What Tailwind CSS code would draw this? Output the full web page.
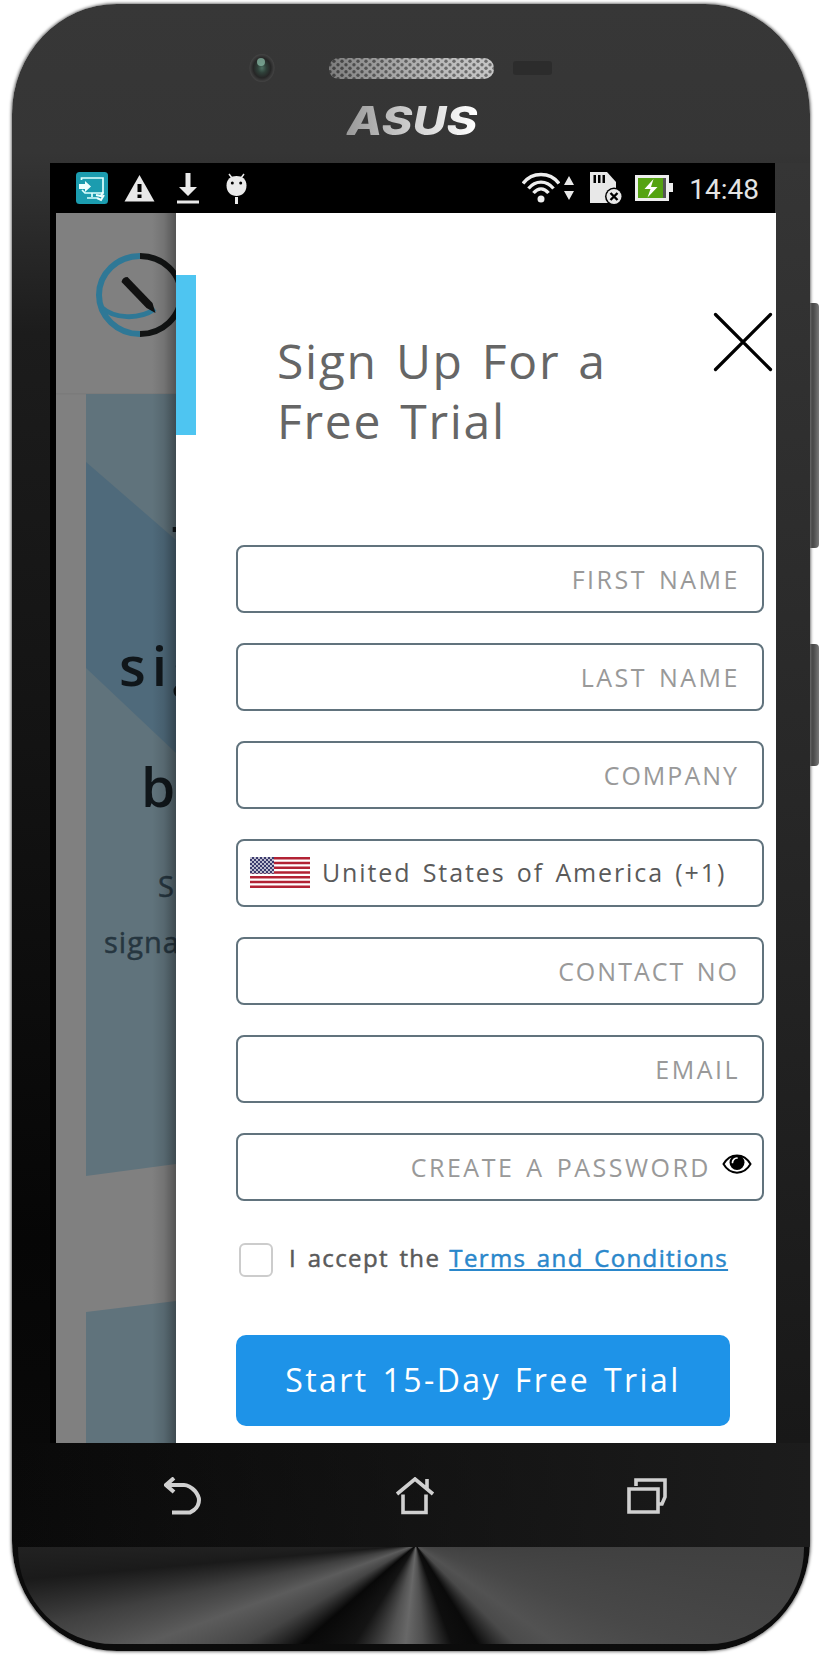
<!DOCTYPE html>
<html lang="en">
<head>
<meta charset="utf-8">
<title>Sign Up For a Free Trial</title>
<script src="https://cdn.jsdelivr.net/npm/@tailwindcss/browser@4"></script>
</head>
<body class="bg-white">
<main class="relative w-[832px] h-[1658px] overflow-hidden bg-white font-['Open_Sans',sans-serif]">
  <!-- volume and power keys -->
  <div class="absolute left-[806px] top-[303px] w-[13px] h-[245px] rounded-r-sm bg-gradient-to-r from-[#222] via-[#444] to-[#777]"></div>
  <div class="absolute left-[806px] top-[644px] w-[13px] h-[122px] rounded-r-sm bg-gradient-to-r from-[#222] via-[#444] to-[#777]"></div>

  <!-- phone body -->
  <div class="absolute left-[12px] top-[4px] w-[798px] h-[1647px] overflow-hidden rounded-[105px/110px] bg-[linear-gradient(to_bottom,#373737_0%,#353535_9%,#1c1c1c_20%,#131313_45%,#060606_75%,#0c0c0c_100%)] shadow-[0_0_3px_1px_#777]">
    <div class="absolute right-0 top-[159px] w-[35px] h-[1280px] bg-gradient-to-b from-[#353535] via-[#272727] to-[#181818]"></div>
    <div class="flex flex-col">
      <!-- top bezel -->
      <header class="flex flex-col items-center h-[159px]">
        <svg class="w-[798px] h-[93px]" viewBox="12 4 798 93">
          <defs>
            <pattern id="mesh" width="8" height="7" patternUnits="userSpaceOnUse"><rect width="8" height="7" fill="#b8b8b8"/><circle cx="2" cy="1.8" r="1.7" fill="#4a4a4a"/><circle cx="6" cy="5.3" r="1.7" fill="#4a4a4a"/></pattern>
            <linearGradient id="sp"><stop offset="0" stop-color="#333" stop-opacity=".45"/><stop offset="1" stop-color="#fff" stop-opacity=".2"/></linearGradient>
            <radialGradient id="cam"><stop offset="0" stop-color="#4d7062"/><stop offset=".35" stop-color="#2f4039"/><stop offset=".7" stop-color="#262626"/><stop offset="1" stop-color="#444"/></radialGradient>
          </defs>
          <ellipse cx="262" cy="68" rx="12.500" ry="14" fill="url(#cam)"/>
          <ellipse cx="261" cy="62" rx="4" ry="4" fill="#8fc2ac" opacity=".7"/>
          <rect x="329" y="58" width="165" height="21" rx="10" fill="url(#mesh)"/>
          <rect x="329" y="58" width="165" height="21" rx="10" fill="url(#sp)"/>
          <rect x="513" y="61" width="39" height="14" rx="3" fill="#2c2c2c"/>
        </svg>
        <div class="-mt-[1px] ml-[1px] h-[50px] leading-[50px] text-[40px] font-extrabold italic scale-x-[1.17] font-['Inter',sans-serif] bg-gradient-to-r from-[#999] via-[#d0d0d0] to-[#fff] bg-clip-text text-transparent">ASUS</div>
      </header>

      <!-- screen -->
      <section class="ml-[38px] w-[726px] h-[1280px] bg-black">
        <div class="flex items-center justify-between h-[50px] pl-[26px] pr-[17px]">
          <div class="flex items-center">
            <svg class="w-8 h-8" viewBox="0 0 32 32" fill="none"><rect width="32" height="32" rx="3.500" fill="#1b9caf"/><path d="M5.500 8V6H27v15H9l-3-3M16 21v4M11 26h10" stroke="#dff" stroke-width="1.700"/><path d="M3 12h6V9l6 5.500-6 5.500v-3H3z" fill="#eff"/><path d="M20 23l5 1 2-4M21 26l4 2 3-5" stroke="#eff" stroke-width="2"/></svg>
            <svg class="ml-4 w-[31px] h-[28px]" viewBox="0 0 31 28"><path d="M15.500 1L30.500 27.500H.5z" fill="#e8e8e8"/><path d="M13.500 10h4v8h-4zM13.500 20.500h4v3.500h-4z" fill="#000"/></svg>
            <svg class="ml-[22px] w-[22px] h-[31px]" viewBox="0 0 22 31" fill="#eaeaea"><path d="M8.500 0h5v14H20l-9 9-9-9h6.500zM0 27.500h22V30.500H0z"/></svg>
            <svg class="ml-[27px] w-[21px] h-[31px]" viewBox="0 0 21 31"><path d="M3 1l3 4M18 1l-3 4" stroke="#eaeaea" stroke-width="1.500"/><path d="M.5 12.500C.5 6 5 3 10.500 3s10 3 10 9.500-4.500 10.500-10 10.500S.5 19 .5 12.500z" fill="#eaeaea"/><circle cx="6.300" cy="10" r="1.500"/><circle cx="14.700" cy="10" r="1.500"/><path d="M9 24h3v7H9z" fill="#eaeaea"/></svg>
          </div>
          <div class="flex items-center">
            <svg class="w-[38px] h-[32px]" viewBox="0 0 38 32" fill="none" stroke="#eee" stroke-width="3.400"><path d="M1 11.500C10-.5 28-.5 37 11.500M6.500 16.500c7-8.500 18-8.500 25 0M11.500 21c4.500-5.500 10.500-5.500 15 0"/><circle cx="19" cy="27" r="3.500" fill="#eee" stroke="none"/></svg>
            <svg class="ml-1 w-[10px] h-[24px]" viewBox="0 0 10 24" fill="#e8e8e8"><path d="M5 0l5 9H0zM5 24l5-9H0z"/></svg>
            <svg class="ml-4 w-[33px] h-[32px]" viewBox="0 0 33 32"><path d="M0 0h17l9 10v21H0z" fill="#e8e8e8"/><path d="M3.500 3h2.500v8H3.500zM8 3h2.500v8H8zM12.500 3H15v8h-2.500z"/><circle cx="24" cy="24.500" r="9"/><circle cx="24" cy="24.500" r="7.500" fill="#e8e8e8"/><path d="M20.500 21l7 7m0-7l-7 7" stroke="#000" stroke-width="2.400"/></svg>
            <svg class="ml-3 w-[38px] h-[26px]" viewBox="0 0 38 26"><path d="M0 0h34v8h4v9h-4v9H0z" fill="#eee"/><path d="M3 3h25v20H3z" fill="#55a312"/><path d="M28 3h3v20h-3z" fill="#555"/><path d="M18.500 4L9.500 14h6l-3 8.500L22.500 12h-6.500z" fill="#fff"/></svg>
            <span class="ml-[16px] pt-[3px] text-[28px] leading-[47px] text-[#e4e4e4] font-['Roboto',sans-serif]">14:48</span>
          </div>
        </div>

        <div class="flex ml-[6px] w-[720px] h-[1230px]">
          <!-- dimmed landing page -->
          <div class="relative w-[120px] h-full overflow-hidden bg-[#808080]">
            <svg class="block w-[120px] h-[1230px]" viewBox="56 213 120 1230">
              <g fill="none" stroke-width="6"><path d="M140 256a41 39 0 0 0 0 78" stroke="#2f7896"/><path d="M140 256a41 39 0 0 1 0 78" stroke="#121414"/><path d="M101 307c13 12 38 13 54 2" stroke="#2f7896" stroke-width="5"/></g>
              <path d="M121.500 282q1-5 6-5l25 26 3 10-9-5z" fill="#111"/>
              <path d="M56 393h120v1.500H56z" fill="#7b7b7b"/>
              <path d="M86 394h90v770l-90 12z" fill="#60737c"/>
              <path d="M86 462l90 78v213l-90-85z" fill="#4f6a7b"/>
              <path d="M86 1312l90-11v142H86z" fill="#60737c"/>
              <g font-family="Open Sans">
                <text x="172" y="563" font-size="50" font-weight="600" fill="#10161a">T</text>
                <text x="119" y="686" font-size="55" font-weight="600" letter-spacing="6" fill="#10161a">sig</text>
                <text x="141" y="807" font-size="55" font-weight="600" fill="#10161a">b</text>
                <text x="158" y="897" font-size="29" fill="#263640" stroke="#263640" stroke-width=".5">S</text>
                <text x="104" y="953" font-size="29" letter-spacing="1" fill="#263640" stroke="#263640" stroke-width=".5">signa</text>
              </g>
            </svg>
            <div class="absolute inset-y-0 right-0 w-[24px] bg-gradient-to-r from-black/0 via-black/10 to-black/35"></div>
          </div>

          <!-- sign-up drawer -->
          <div class="relative w-[600px] h-full bg-white">
            <svg class="absolute left-[537px] top-[99px] w-[60px] h-[60px]" viewBox="0 0 60 60"><path d="M2.500 2.500l55 55m0-55l-55 55" stroke="#000" stroke-width="3.200" stroke-linecap="round"/></svg>
            <div class="flex pt-[62px]">
              <div class="w-5 h-[160px] bg-[#4ec5f1]"></div>
              <h1 class="ml-[81px] mt-[56px] text-[48px] leading-[60px] tracking-[1.700px] [word-spacing:4px] text-[#666]">Sign Up For a<br>Free Trial</h1>
            </div>
            <form class="absolute left-[60px] top-[332px] flex flex-col gap-[30px] w-[528px] text-[25px] tracking-[2.500px] [word-spacing:3px] text-[#999]">
              <div class="flex items-center justify-end h-[68px] pt-[2px] pr-[22px] rounded-lg border-2 border-[#61737d]"><span>FIRST NAME</span></div>
              <div class="flex items-center justify-end h-[68px] pt-[2px] pr-[22px] rounded-lg border-2 border-[#61737d]"><span>LAST NAME</span></div>
              <div class="flex items-center justify-end h-[68px] pt-[2px] pr-[23px] rounded-lg border-2 border-[#61737d] tracking-[2px]"><span>COMPANY</span></div>
              <div class="flex items-center h-[68px] pl-3 rounded-lg border-2 border-[#61737d] text-[#5a5a5a] tracking-[1.880px]">
                <svg class="w-[60px] h-[31px] mr-[12px] -mt-[2px]" viewBox="0 0 60 31"><defs><pattern id="stars" width="4" height="4" patternUnits="userSpaceOnUse"><rect width="4" height="4" fill="#3c3b6e"/><circle cx="1" cy="1" r=".9" fill="#fff"/><circle cx="3" cy="3" r=".9" fill="#fff"/></pattern></defs><rect width="60" height="31" fill="#fff"/><path d="M0 1.200h60M0 6h60M0 10.700h60M0 15.500h60M0 20.300h60M0 25h60M0 29.800h60" stroke="#b22234" stroke-width="2.400"/><rect width="24" height="16.700" fill="url(#stars)"/></svg>
                <span class="whitespace-nowrap">United States of America (+1)</span>
              </div>
              <div class="flex items-center justify-end h-[68px] pt-[2px] pr-[23px] rounded-lg border-2 border-[#61737d] tracking-[2px]"><span>CONTACT NO</span></div>
              <div class="flex items-center justify-end h-[68px] pt-[2px] pr-[22px] rounded-lg border-2 border-[#61737d]"><span>EMAIL</span></div>
              <div class="flex items-center justify-end h-[68px] pt-[2px] pr-[10px] rounded-lg border-2 border-[#61737d]"><span>CREATE A PASSWORD</span>
                <svg class="ml-[11px] mb-[8px] w-[30px] h-[20px]" viewBox="0 0 30 20"><path d="M1.500 10C8-1.500 22-1.500 28.500 10 22 21.500 8 21.500 1.500 10z" fill="#fff" stroke="#000" stroke-width="2"/><circle cx="15" cy="8.500" r="7.500"/><path d="M10.500 8.500a4.500 4.500 0 0 1 4.500-4.500" fill="none" stroke="#fff" stroke-width="1.700" stroke-linecap="round"/></svg>
              </div>
              <div class="flex items-center mt-[11px] h-[36px] text-[24px] tracking-[1.360px] [-webkit-text-stroke:0.5px] text-[#5a5a5a]">
                <div class="ml-[3px] w-[34px] h-[34px] rounded-md border-2 border-[#ccc]"></div>
                <span class="ml-4 pb-1">I accept the</span>
                <a class="ml-[9px] pb-1 text-[#2a87cb] underline underline-offset-2 decoration-2">Terms and Conditions</a>
              </div>
              <div class="flex items-center justify-center mt-[27px] w-[494px] h-[91px] pb-[2px] rounded-[10px] bg-[#1e93e8] text-white text-[32px] tracking-[2.450px]"><span>Start 15-Day Free Trial</span></div>
            </form>
          </div>
        </div>
      </section>

      <!-- touch keys -->
      <nav class="flex items-center h-[104px] pt-[1px] bg-gradient-to-r from-transparent to-[#1c1c1c]">
        <svg class="ml-[152px] w-[40px] h-[38px]" viewBox="0 0 40 38" fill="none" stroke="#d0d0d0" stroke-width="4"><path d="M3 8h17q5 0 11 6 4 5 4 9 0 6-5 10l-4 2.500H8M10 1L2 8l8 7"/></svg>
        <svg class="ml-[191px] w-[40px] h-[38px]" viewBox="0 0 40 38" fill="none" stroke="#d0d0d0" stroke-width="3.600"><path d="M2 17L20 2l18 15M32 11V2M8 17.500v18h23v-18"/></svg>
        <svg class="ml-[192px] w-[40px] h-[36px]" viewBox="0 0 40 36" fill="none" stroke="#d0d0d0" stroke-width="3.600"><path d="M2 11h29v23H2zM9 8V2h29v17l-3 7h-3"/></svg>
      </nav>
      <!-- brushed chin -->
      <footer class="ml-[6px] w-[786px] h-[97px] rounded-b-[96px] bg-[conic-gradient(from_90deg_at_398px_-2px,#404040_0deg,#484848_20deg,#525252_35deg,#4a4a4a_45deg,#0a0a0a_58deg,#0e0e0e_70deg,#505050_86deg,#686868_96deg,#525252_105deg,#141414_122deg,#080808_139deg,#454545_150deg,#5c5c5c_160deg,#404040_168deg,#1a1a1a_175deg,#222_180deg,#404040_360deg)]"></footer>
    </div>
  </div>
</main>
</body>
</html>
